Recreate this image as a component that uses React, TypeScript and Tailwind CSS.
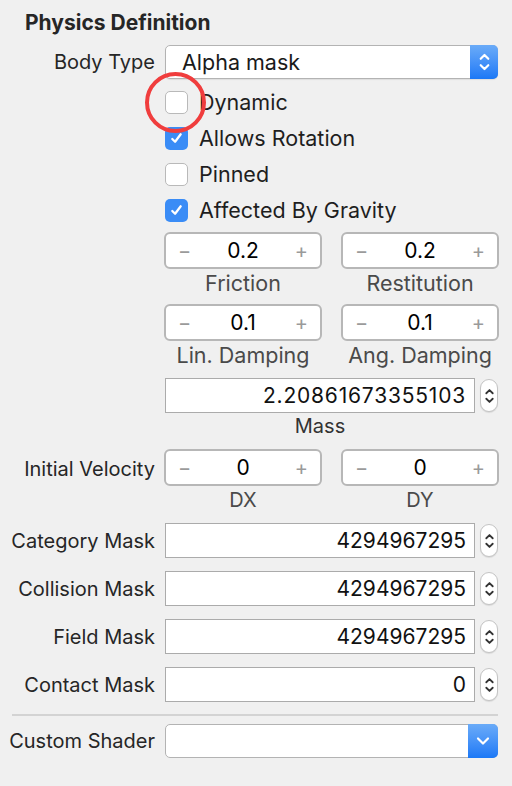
import React from "react";

const font = { fontFamily: "Inter, 'Liberation Sans', sans-serif" };

function UpDown({ className }: { className?: string }) {
  return (
    <svg viewBox="0 0 12 22" className={className} fill="none" stroke="currentColor" strokeWidth="2" strokeLinecap="round" strokeLinejoin="round">
      <path d="M2.5 8 L6 4.5 L9.5 8" />
      <path d="M2.5 14 L6 17.5 L9.5 14" />
    </svg>
  );
}

function Popup({ value }: { value?: string }) {
  return (
    <div className="flex h-[34px] w-[333px] rounded-[5px] border border-[#b3b3b3] bg-white shadow-[0_1px_1px_rgba(0,0,0,0.08)]">
      <div className="flex-1 pl-[16px] text-[21.5px] leading-[32px] text-[#1a1a1a]">{value}</div>
      <div className="flex w-[28px] items-center justify-center rounded-r-[5px] bg-gradient-to-b from-[#6aabf8] to-[#1a78f6] -my-px -mr-px">
        <UpDown className="h-[24px] w-[13px] text-white" />
      </div>
    </div>
  );
}

function ShaderPopup() {
  return (
    <div className="flex h-[34px] w-[333px] rounded-[5px] border border-[#b3b3b3] bg-white">
      <div className="flex-1" />
      <div className="flex w-[30px] items-center justify-center rounded-r-[5px] bg-gradient-to-b from-[#6aabf8] to-[#1a78f6] -my-px -mr-px">
        <svg viewBox="0 0 14 10" className="h-[10px] w-[14px]" fill="none" stroke="white" strokeWidth="2.2" strokeLinecap="round" strokeLinejoin="round">
          <path d="M2 2.5 L7 7.5 L12 2.5" />
        </svg>
      </div>
    </div>
  );
}

function Check({ label, checked }: { label: string; checked?: boolean }) {
  return (
    <div className="flex h-[36px] items-center pl-[165px]">
      {checked ? (
        <div className="flex h-[23px] w-[23px] items-center justify-center rounded-[5px] bg-[#3a8cf6]">
          <svg viewBox="0 0 16 16" className="h-[15px] w-[15px]" fill="none" stroke="white" strokeWidth="2.4" strokeLinecap="round" strokeLinejoin="round">
            <path d="M3.5 8.5 L6.5 11.5 L12.5 3.5" />
          </svg>
        </div>
      ) : (
        <div className="h-[23px] w-[23px] rounded-[5px] border border-[#b9b9b9] bg-white" />
      )}
      <span className="ml-[11px] text-[21.5px] text-[#1e1e1e]">{label}</span>
    </div>
  );
}

function Stepper({ value, label, big }: { value: string; label: string; big?: boolean }) {
  return (
    <div className="flex w-[158px] flex-col items-center">
      <div className="flex h-[37px] w-[158px] items-center justify-between rounded-[6px] border-2 border-[#b7b7b7] bg-white px-[12px]">
        <span className="text-[20px] text-[#9a9a9a]">−</span>
        <span className="text-[21px] text-black">{value}</span>
        <span className="text-[20px] text-[#9a9a9a]">+</span>
      </div>
      <div className={`mt-[1px] leading-[26px] text-[#4a4a4a] ${big ? "text-[21.5px]" : "text-[20px]"}`}>{label}</div>
    </div>
  );
}

function Arrows() {
  return (
    <div className="ml-[5px] flex h-[33px] w-[18px] items-center justify-center rounded-full border border-[#c4c4c4] bg-white shadow-[0_1px_1px_rgba(0,0,0,0.1)]">
      <UpDown className="h-[24px] w-[11px] text-[#333]" />
    </div>
  );
}

function NumField({ value, wide }: { value: string; wide?: boolean }) {
  return (
    <div className="flex items-center">
      <div className={`h-[35px] w-[310px] border border-[#ababab] bg-white pr-[8px] text-right text-[21px] leading-[33px] text-[#111] ${wide ? "tracking-[0.8px]" : ""}`}>
        {value}
      </div>
      <Arrows />
    </div>
  );
}

function Row({ label, children, className }: { label: string; children: React.ReactNode; className?: string }) {
  return (
    <div className={`flex items-center ${className ?? ""}`}>
      <div className="w-[155px] text-right text-[20px] text-[#262626]">{label}</div>
      <div className="ml-[10px]">{children}</div>
    </div>
  );
}

export default function App() {
  return (
    <div className="h-[786px] w-[512px] overflow-hidden bg-[#f0f0f0]" style={font}>
      <div className="pl-[25px] pt-[9px] text-[21px] font-bold leading-[28px] text-[#262626]">Physics Definition</div>

      <Row label="Body Type" className="mt-[8px]">
        <Popup value="Alpha mask" />
      </Row>

      <div className="relative mt-[5px]">
        <Check label="Dynamic" />
        <Check label="Allows Rotation" checked />
        <Check label="Pinned" />
        <Check label="Affected By Gravity" checked />
        <div className="absolute left-[145px] top-[-12px] h-[61px] w-[61px] rounded-full border-[4px] border-[#f03d3d]" />
      </div>

      <div className="mt-[4px] flex gap-[19px] pl-[164px]">
        <Stepper value="0.2" label="Friction" big />
        <Stepper value="0.2" label="Restitution" big />
      </div>
      <div className="mt-[8px] flex gap-[19px] pl-[164px]">
        <Stepper value="0.1" label="Lin. Damping" big />
        <Stepper value="0.1" label="Ang. Damping" big />
      </div>

      <div className="mt-[10px] pl-[165px]">
        <NumField value="2.20861673355103" wide />
        <div className="w-[310px] text-center text-[20px] leading-[26px] text-[#333]">Mass</div>
      </div>

      <div className="mt-[10px] flex">
        <div className="w-[155px] pt-[5px] text-right text-[20px] text-[#262626]">Initial Velocity</div>
        <div className="ml-[9px] flex gap-[19px]">
          <Stepper value="0" label="DX" />
          <Stepper value="0" label="DY" />
        </div>
      </div>

      <div className="mt-[10px] flex flex-col gap-[13px]">
        <Row label="Category Mask"><NumField value="4294967295" /></Row>
        <Row label="Collision Mask"><NumField value="4294967295" /></Row>
        <Row label="Field Mask"><NumField value="4294967295" /></Row>
        <Row label="Contact Mask"><NumField value="0" /></Row>
      </div>

      <div className="mx-[12px] mt-[12px] h-[2px] w-[486px] bg-[#d3d3d3]" />

      <Row label="Custom Shader" className="mt-[8px]">
        <ShaderPopup />
      </Row>
    </div>
  );
}
